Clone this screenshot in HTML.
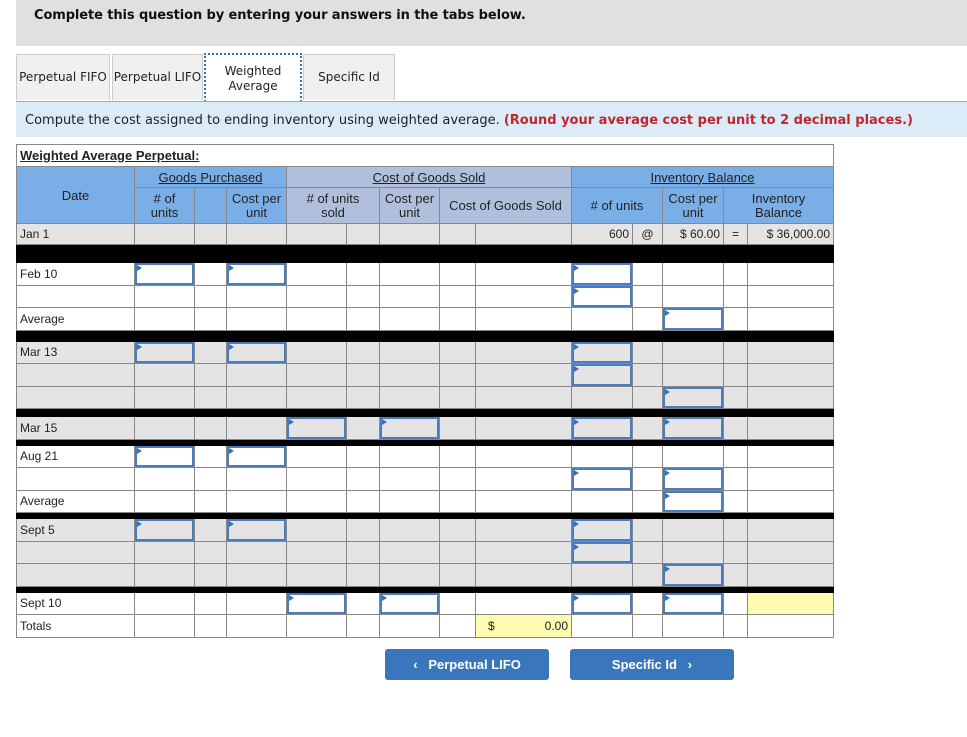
<!DOCTYPE html>
<html><head><meta charset="utf-8">
<style>
body{margin:0;background:#fff;width:967px;height:737px;position:relative;overflow:hidden;font-family:"Liberation Sans",Arial,sans-serif}
.top{position:absolute;left:16px;top:0;width:951px;height:46px;background:#e0e0e0}
.top div{position:absolute;left:18px;top:8px;font:bold 13px "DejaVu Sans",Verdana,sans-serif;color:#111;letter-spacing:-0.1px}
.tab{position:absolute;top:54px;height:46px;background:#f0f0f0;border:1px solid #ccc;border-bottom:none;box-sizing:border-box;font:12px "DejaVu Sans",Verdana,sans-serif;color:#222;display:flex;align-items:center;justify-content:center;text-align:center;line-height:15px}
.tab.on{background:#fff;border:2px dotted #3a6fb5;border-bottom:none;top:53px;height:49px}
.band{position:absolute;left:16px;top:101px;width:951px;height:36px;background:#dcebf8;border-top:1px solid #aaa;box-sizing:border-box}
.band div{position:absolute;left:9px;top:11px;font:13px "DejaVu Sans",Verdana,sans-serif;color:#222;white-space:nowrap}
.band b{color:#c0272d}
table{position:absolute;left:16px;top:144px;border-collapse:collapse;table-layout:fixed;width:817px;font-size:12px;color:#222}
td{border:1px solid #888;padding:0 3px;overflow:hidden;white-space:nowrap;position:relative}
.tt td{border:1px solid #888;font-weight:bold;font-size:13px;text-decoration:underline;height:21px}
.h1 td{height:20px;text-align:center;font-size:13px;text-decoration:underline;border-color:#888}
.h2 td{height:35px;text-align:center;line-height:14px;font-size:13px}
.b{background:#7aaee6}.c{background:#b0c0dc}
.g td{background:#e4e4e4}
.k td{background:#000;border-color:#000}
tr.r td{height:21.5px}
tr.j td{height:20px}
.i{box-shadow:inset 0 0 0 2px #4a7cc0}
.i:before{content:"";position:absolute;left:2px;top:2px;border-left:5px solid #3a6fb5;border-top:3px solid transparent;border-bottom:3px solid transparent}
.y{background:#fffbb0 !important}
.rt{text-align:right}
.btn{position:absolute;top:649px;height:31px;background:#3a76bb;border-radius:3px;color:#fff;font-weight:bold;font-size:13px;display:flex;align-items:center;justify-content:center}
</style></head><body>
<div class="top"><div>Complete this question by entering your answers in the tabs below.</div></div>
<div class="tab" style="left:16px;width:94px">Perpetual FIFO</div>
<div class="tab" style="left:112px;width:91px">Perpetual LIFO</div>
<div class="tab on" style="left:204px;width:98px">Weighted<br>Average</div>
<div class="tab" style="left:303px;width:92px">Specific Id</div>
<div class="band"><div>Compute the cost assigned to ending inventory using weighted average. <b>(Round your average cost per unit to 2 decimal places.)</b></div></div>
<table>
<colgroup><col style="width:118px"><col style="width:60px"><col style="width:32px"><col style="width:60px"><col style="width:60px"><col style="width:33px"><col style="width:60px"><col style="width:36px"><col style="width:96px"><col style="width:61px"><col style="width:30px"><col style="width:61px"><col style="width:24px"><col style="width:86px"></colgroup>
<tr class="tt"><td colspan="14">Weighted Average Perpetual:</td></tr>
<tr class="h1"><td class="b" rowspan="2" style="text-decoration:none">Date</td><td class="b" colspan="3">Goods Purchased</td><td class="c" colspan="5">Cost of Goods Sold</td><td class="b" colspan="5">Inventory Balance</td></tr>
<tr class="h2"><td class="b"># of<br>units</td><td class="b"></td><td class="b">Cost per<br>unit</td><td class="c" colspan="2"># of units<br>sold</td><td class="c">Cost per<br>unit</td><td class="c" colspan="2">Cost of Goods Sold</td><td class="b" colspan="2"># of units</td><td class="b">Cost per<br>unit</td><td class="b" colspan="2">Inventory<br>Balance</td></tr>
<tr class="j g"><td>Jan 1</td><td></td><td></td><td></td><td></td><td></td><td></td><td></td><td></td><td class="rt">600</td><td style="text-align:center">@</td><td class="rt">$ 60.00</td><td style="text-align:center">=</td><td class="rt">$ 36,000.00</td></tr>
<tr class="k"><td colspan="14" style="height:17px"></td></tr>
<tr class="r"><td>Feb 10</td><td class="i"></td><td></td><td class="i"></td><td></td><td></td><td></td><td></td><td></td><td class="i"></td><td></td><td></td><td></td><td></td></tr>
<tr class="r"><td></td><td></td><td></td><td></td><td></td><td></td><td></td><td></td><td></td><td class="i"></td><td></td><td></td><td></td><td></td></tr>
<tr class="r"><td>Average</td><td></td><td></td><td></td><td></td><td></td><td></td><td></td><td></td><td></td><td></td><td class="i"></td><td></td><td></td></tr>
<tr class="k"><td colspan="14" style="height:10px"></td></tr>
<tr class="r g"><td>Mar 13</td><td class="i"></td><td></td><td class="i"></td><td></td><td></td><td></td><td></td><td></td><td class="i"></td><td></td><td></td><td></td><td></td></tr>
<tr class="r g"><td></td><td></td><td></td><td></td><td></td><td></td><td></td><td></td><td></td><td class="i"></td><td></td><td></td><td></td><td></td></tr>
<tr class="r g"><td></td><td></td><td></td><td></td><td></td><td></td><td></td><td></td><td></td><td></td><td></td><td class="i"></td><td></td><td></td></tr>
<tr class="k"><td colspan="14" style="height:7px"></td></tr>
<tr class="r g"><td>Mar 15</td><td></td><td></td><td></td><td class="i"></td><td></td><td class="i"></td><td></td><td></td><td class="i"></td><td></td><td class="i"></td><td></td><td></td></tr>
<tr class="k"><td colspan="14" style="height:5px"></td></tr>
<tr class="r"><td>Aug 21</td><td class="i"></td><td></td><td class="i"></td><td></td><td></td><td></td><td></td><td></td><td></td><td></td><td></td><td></td><td></td></tr>
<tr class="r"><td></td><td></td><td></td><td></td><td></td><td></td><td></td><td></td><td></td><td class="i"></td><td></td><td class="i"></td><td></td><td></td></tr>
<tr class="r"><td>Average</td><td></td><td></td><td></td><td></td><td></td><td></td><td></td><td></td><td></td><td></td><td class="i"></td><td></td><td></td></tr>
<tr class="k"><td colspan="14" style="height:5px"></td></tr>
<tr class="r g"><td>Sept 5</td><td class="i"></td><td></td><td class="i"></td><td></td><td></td><td></td><td></td><td></td><td class="i"></td><td></td><td></td><td></td><td></td></tr>
<tr class="r g"><td></td><td></td><td></td><td></td><td></td><td></td><td></td><td></td><td></td><td class="i"></td><td></td><td></td><td></td><td></td></tr>
<tr class="r g"><td></td><td></td><td></td><td></td><td></td><td></td><td></td><td></td><td></td><td></td><td></td><td class="i"></td><td></td><td></td></tr>
<tr class="k"><td colspan="14" style="height:5px"></td></tr>
<tr class="r"><td>Sept 10</td><td></td><td></td><td></td><td class="i"></td><td></td><td class="i"></td><td></td><td></td><td class="i"></td><td></td><td class="i"></td><td></td><td class="y"></td></tr>
<tr class="r"><td>Totals</td><td></td><td></td><td></td><td></td><td></td><td></td><td></td><td class="y"><span style="position:absolute;left:12px;top:4px">$</span><span style="position:absolute;right:3px;top:4px">0.00</span></td><td></td><td></td><td></td><td></td><td></td></tr>
</table>
<div class="btn" style="left:385px;width:164px">&lsaquo;&nbsp;&nbsp;&nbsp;Perpetual LIFO</div>
<div class="btn" style="left:570px;width:164px">Specific Id&nbsp;&nbsp;&nbsp;&rsaquo;</div>
</body></html>
